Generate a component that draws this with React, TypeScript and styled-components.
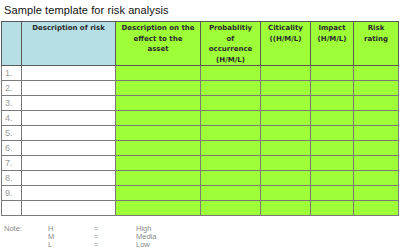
import * as React from 'react'
import styled, { createGlobalStyle } from 'styled-components'

const GlobalStyle = createGlobalStyle`
  html, body {
    margin: 0;
    padding: 0;
    background: #fff;
  }
`

const Page = styled.div`
  width: 400px;
  height: 251px;
  padding: 4px 0 0 1px;
  box-sizing: border-box;
  overflow: hidden;
  font-family: 'Liberation Sans', Arial, sans-serif;
`

const Title = styled.h1`
  margin: 0 0 0 3px;
  font-size: 11px;
  font-weight: normal;
  line-height: 12px;
  color: #111;
  letter-spacing: 0.1px;
`

const Grid = styled.table`
  margin-top: 5px;
  width: 397px;
  border-collapse: collapse;
  table-layout: fixed;
  border: 1px solid #777;
`

const HeadCell = styled.th<{ $tone: 'blue' | 'green'; $w: number }>`
  width: ${p => p.$w}px;
  height: 42px;
  padding: 1px 1px 0;
  box-sizing: border-box;
  vertical-align: top;
  text-align: center;
  background: ${p => (p.$tone === 'blue' ? '#b5dfe5' : '#9eff38')};
  border: 1px solid #5a5a5a;
  font-family: 'DejaVu Sans', sans-serif;
  font-size: 7px;
  font-weight: bold;
  line-height: 10.5px;
  color: #2a2a2a;
`

const Row = styled.tr`
  height: 15px;
`

const Cell = styled.td<{ $tone: 'white' | 'green' }>`
  padding: 0 0 0 3px;
  background: ${p => (p.$tone === 'green' ? '#9eff38' : '#fff')};
  border: 1px solid #7a7a7a;
  font-size: 9px;
  color: #9a9a9a;
  line-height: 12px;
`

const Notes = styled.div`
  margin-top: 9px;
  display: grid;
  grid-template-columns: 44px 46px 42px auto;
  padding-left: 3px;
  font-size: 7.5px;
  line-height: 8px;
  color: #8a8a8a;
`

type Column = { label: string[]; w: number; tone: 'blue' | 'green' }

const columns: Column[] = [
  { label: [], w: 20, tone: 'blue' },
  { label: ['Description of risk'], w: 94, tone: 'blue' },
  { label: ['Description on the', 'effect to the', 'asset'], w: 85, tone: 'green' },
  { label: ['Probablitiy', 'of', 'occurrence', '(H/M/L)'], w: 60, tone: 'green' },
  { label: ['Citicality', '((H/M/L)'], w: 50, tone: 'green' },
  { label: ['Impact', '(H/M/L)'], w: 43, tone: 'green' },
  { label: ['Risk', 'rating'], w: 45, tone: 'green' },
]

const rows = ['1.', '2.', '3.', '4.', '5.', '6.', '7.', '8.', '9.', '']

const legend = [
  ['Note:', 'H', '=', 'High'],
  ['', 'M', '=', 'Media'],
  ['', 'L', '=', 'Low'],
]

export default function App() {
  return (
    <Page>
      <GlobalStyle />
      <Title>Sample template for risk analysis</Title>
      <Grid>
        <thead>
          <tr>
            {columns.map((c, ci) => (
              <HeadCell key={ci} $tone={c.tone} $w={c.w}>
                {c.label.map((l, i) => (
                  <React.Fragment key={i}>
                    {i > 0 && <br />}
                    {l}
                  </React.Fragment>
                ))}
              </HeadCell>
            ))}
          </tr>
        </thead>
        <tbody>
          {rows.map((n, r) => (
            <Row key={r}>
              {columns.map((c, i) => (
                <Cell key={i} $tone={i < 2 ? 'white' : 'green'}>
                  {i === 0 ? n : ''}
                </Cell>
              ))}
            </Row>
          ))}
        </tbody>
      </Grid>
      <Notes>
        {legend.flat().map((t, i) => (
          <span key={i}>{t}</span>
        ))}
      </Notes>
    </Page>
  )
}
